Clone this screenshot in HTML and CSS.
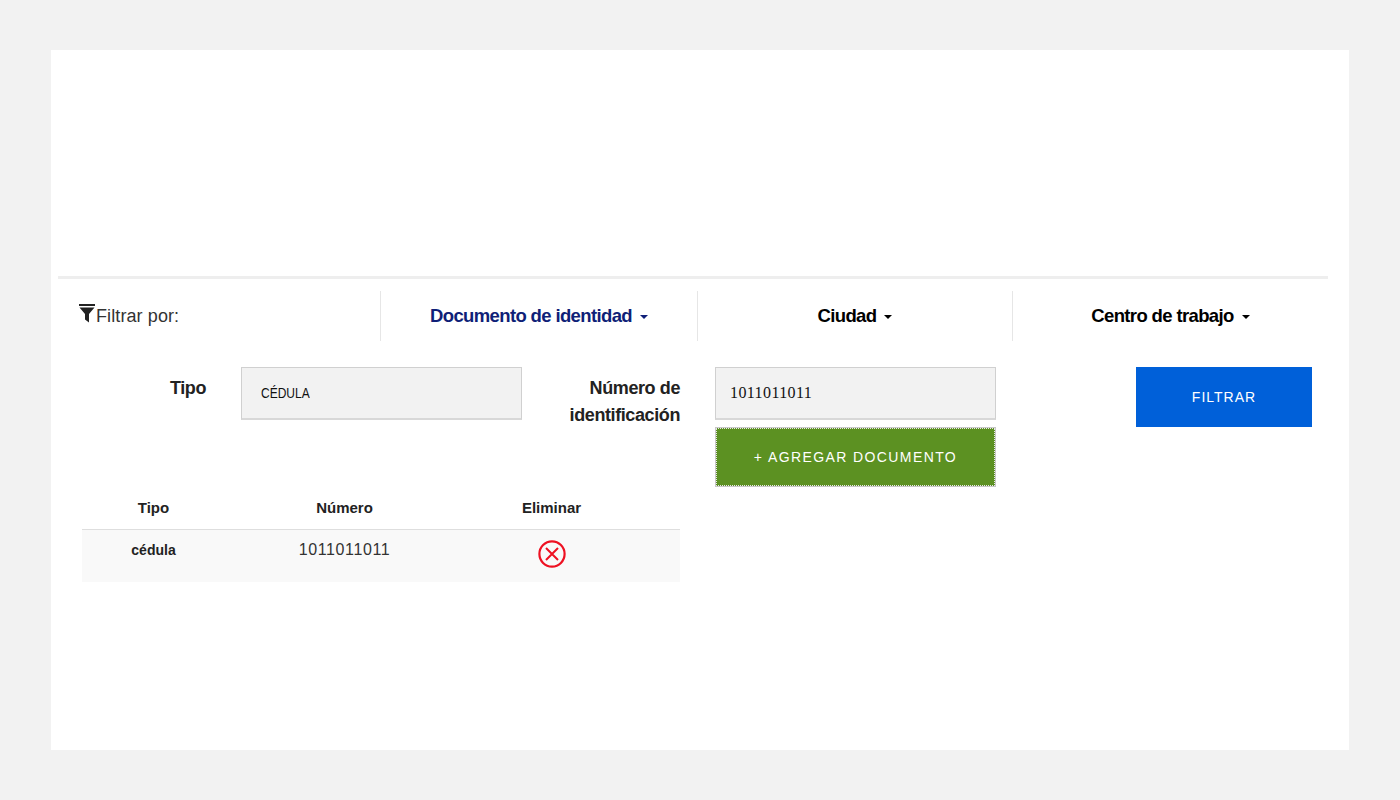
FILE: index.html
```html
<!DOCTYPE html>
<html lang="es">
<head>
<meta charset="utf-8">
<title>Filtrar</title>
<link rel="stylesheet" href="styles.css">
</head>
<body>
<main class="card">
  <section class="panel">
    <nav class="filters">
      <div class="filter-label">
        <svg class="funnel" width="17" height="19" viewBox="0 0 17 19"><rect x="0" y="0" width="16" height="2" fill="#222"/><path d="M0.5 3.5H15.5L10 10V18.5L6 15.5V10Z" fill="#222"/></svg>
        <span>Filtrar por:</span>
      </div>
      <div class="tab tab-active">Documento de identidad<i class="caret"></i></div>
      <div class="tab tab-mid">Ciudad<i class="caret"></i></div>
      <div class="tab">Centro de trabajo<i class="caret"></i></div>
    </nav>
    <div class="form">
      <div class="left">
        <div class="fields">
          <label class="lbl lbl-tipo">Tipo</label>
          <div class="input input-tipo"><span class="narrow">CÉDULA</span></div>
          <label class="lbl lbl-num">Número de<br>identificación</label>
        </div>
        <div class="table">
          <div class="row head"><span class="c1">Tipo</span><span class="c2">Número</span><span class="c3">Eliminar</span></div>
          <div class="row body-row">
            <span class="c1 bold">cédula</span>
            <span class="c2 num">1011011011</span>
            <span class="c3"><svg class="del" width="28" height="28" viewBox="0 0 28 28"><circle cx="14" cy="14" r="12.6" fill="none" stroke="#ee1122" stroke-width="2.2"/><path d="M8 8L20 20M20 8L8 20" stroke="#ee1122" stroke-width="2" fill="none"/></svg></span>
          </div>
        </div>
      </div>
      <div class="mid">
        <div class="input input-num">1011011011</div>
        <button class="btn add">+ AGREGAR DOCUMENTO</button>
      </div>
      <button class="btn go">FILTRAR</button>
    </div>
  </section>
</main>
</body>
</html>
```
FILE: styles.css
```css
* { box-sizing: border-box; }
html, body { margin: 0; height: 100%; }
body {
  background: #f2f2f2;
  padding: 50px 51px;
  font-family: "Liberation Sans", Arial, sans-serif;
  color: #222;
}
.card {
  background: #fff;
  width: 1298px;
  height: 700px;
  padding: 226px 21px 0 7px;
}
.panel { border-top: 3px solid #eeeeee; }
.filters {
  display: flex;
  margin-top: 12px;
  height: 50px;
}
.filter-label {
  width: 322px;
  display: flex;
  align-items: flex-start;
  padding: 13px 0 0 21px;
  font-size: 18px;
  letter-spacing: 0.1px;
  line-height: 24px;
  color: #333;
}
.funnel { flex: none; }
.tab {
  border-left: 1px solid #e6e6e6;
  display: flex;
  justify-content: center;
  align-items: center;
  font-size: 18.5px;
  letter-spacing: -0.63px;
  font-weight: 700;
  color: #000;
  width: 316px;
}
.tab-active { color: #0f1f78; width: 317px; }
.tab-mid { width: 315px; }
.tab-active .caret { border-top-color: #0f1f78; }
.caret {
  width: 0;
  height: 0;
  margin-left: 8px;
  margin-top: 2px;
  border-left: 4px solid transparent;
  border-right: 4px solid transparent;
  border-top: 4px solid #000;
}
.form {
  display: flex;
  align-items: flex-start;
  margin-top: 26px;
}
.left { width: 657px; }
.fields { display: flex; align-items: flex-start; height: 120px; }
.lbl {
  font-size: 18px;
  letter-spacing: -0.4px;
  font-weight: 700;
  text-align: right;
  line-height: 27px;
  color: #222;
}
.lbl-tipo { width: 148px; padding-top: 8px; }
.lbl-num { width: 158px; padding-top: 8px; }
.input {
  background: #f2f2f2;
  border: 1px solid #d0d0d0;
  border-bottom-width: 2px;
  border-bottom-color: #d8d8d8;
  height: 53px;
  width: 281px;
  display: flex;
  align-items: center;
  font-family: "Liberation Serif", serif;
  font-size: 16px;
  letter-spacing: 0.4px;
  color: #111;
}
.input-tipo {
  margin-left: 35px;
  padding-left: 19px;
  padding-bottom: 2px;
  font-family: "Liberation Sans", sans-serif;
  font-size: 15px;
  letter-spacing: 0;
}
.narrow { display: inline-block; transform: scaleX(0.8); transform-origin: left center; }
.input-num { padding-left: 14px; }
.mid { width: 281px; }
.btn {
  border: 0;
  color: #fff;
  font-family: "Liberation Sans", sans-serif;
  font-size: 14px;
  display: block;
}
.add {
  width: 281px;
  height: 60px;
  margin-top: 7px;
  letter-spacing: 1.4px;
  background: #5c9122;
  outline: 1px dotted #e8e8e8;
  outline-offset: -2px;
  border: 1px solid #c8c8c8;
}
.go {
  width: 176px;
  height: 60px;
  margin-left: 140px;
  letter-spacing: 1px;
  background: #0060d9;
}
.table { width: 598px; margin-left: 24px; }
.row { display: flex; }
.head {
  height: 43px;
  align-items: flex-start;
  padding-top: 12px;
  font-size: 15px;
  font-weight: 700;
  line-height: 18px;
  border-bottom: 1px solid #dedede;
}
.body-row { height: 52px; background: #f9f9f9; font-size: 14px; padding-top: 11px; line-height: 18px; }
.c1 { width: 143px; text-align: center; }
.c2 { width: 239px; text-align: center; }
.c3 { width: 175px; text-align: center; }
.bold { font-weight: 700; }
.num { font-size: 16px; letter-spacing: 0.6px; color: #333; }
.del { display: block; margin: -1px auto 0; }
```
